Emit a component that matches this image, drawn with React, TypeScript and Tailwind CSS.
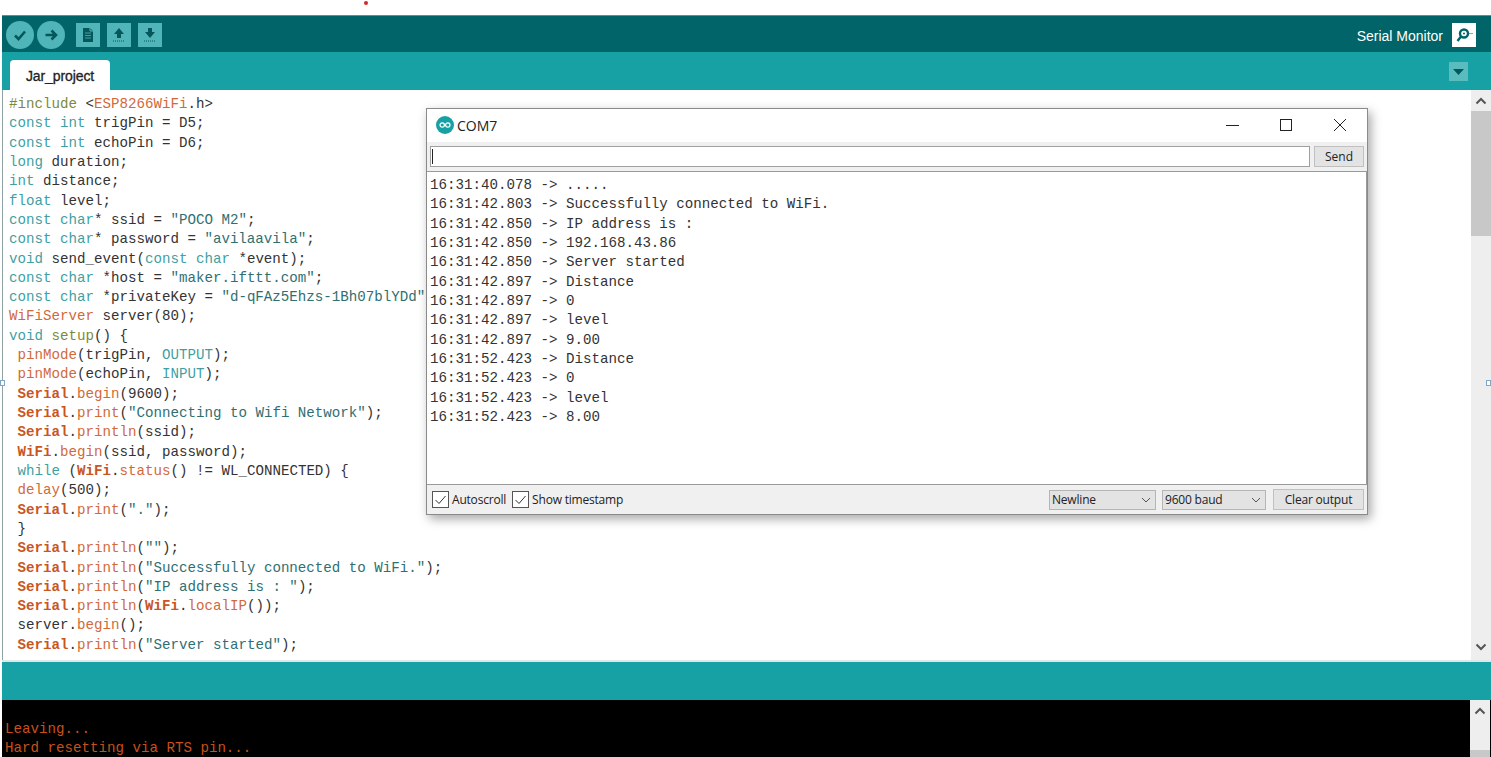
import React from "react";

const mono = "font-['Liberation_Mono',monospace]";
const ui = "font-['Open_Sans','Noto_Sans',sans-serif]";

// token colours from the Arduino theme
const KW = "text-[#3f9fa3]";
const FN = "text-[#d2693a]";
const OBJ = "font-bold text-[#c9561f]";
const STR = "text-[#2f6f72]";
const INC = "text-[#7d8a3a]";
const TXT = "text-[#333333]";

type Tok = [string, string?];

const code: Tok[][] = [
  [["#include", INC], [" <"], ["ESP8266WiFi", FN], [".h>"]],
  [["const int", KW], [" trigPin = D5;"]],
  [["const int", KW], [" echoPin = D6;"]],
  [["long", KW], [" duration;"]],
  [["int", KW], [" distance;"]],
  [["float", KW], [" level;"]],
  [["const char", KW], ["* ssid = "], ['"POCO M2"', STR], [";"]],
  [["const char", KW], ["* password = "], ['"avilaavila"', STR], [";"]],
  [["void", KW], [" send_event("], ["const char", KW], [" *event);"]],
  [["const char", KW], [" *host = "], ['"maker.ifttt.com"', STR], [";"]],
  [["const char", KW], [" *privateKey = "], ['"d-qFAz5Ehzs-1Bh07blYDd"', STR]],
  [["WiFiServer", FN], [" server(80);"]],
  [["void", KW], [" "], ["setup", INC], ["() {"]],
  [[" "], ["pinMode", FN], ["(trigPin, "], ["OUTPUT", KW], [");"]],
  [[" "], ["pinMode", FN], ["(echoPin, "], ["INPUT", KW], [");"]],
  [[" "], ["Serial", OBJ], ["."], ["begin", FN], ["(9600);"]],
  [[" "], ["Serial", OBJ], ["."], ["print", FN], ["("], ['"Connecting to Wifi Network"', STR], [");"]],
  [[" "], ["Serial", OBJ], ["."], ["println", FN], ["(ssid);"]],
  [[" "], ["WiFi", OBJ], ["."], ["begin", FN], ["(ssid, password);"]],
  [[" "], ["while", KW], [" ("], ["WiFi", OBJ], ["."], ["status", FN], ["() != WL_CONNECTED) {"]],
  [[" "], ["delay", FN], ["(500);"]],
  [[" "], ["Serial", OBJ], ["."], ["print", FN], ["("], ['"."', STR], [");"]],
  [[" }"]],
  [[" "], ["Serial", OBJ], ["."], ["println", FN], ["("], ['""', STR], [");"]],
  [[" "], ["Serial", OBJ], ["."], ["println", FN], ["("], ['"Successfully connected to WiFi."', STR], [");"]],
  [[" "], ["Serial", OBJ], ["."], ["println", FN], ["("], ['"IP address is : "', STR], [");"]],
  [[" "], ["Serial", OBJ], ["."], ["println", FN], ["("], ["WiFi", OBJ], ["."], ["localIP", FN], ["());"]],
  [[" server."], ["begin", FN], ["();"]],
  [[" "], ["Serial", OBJ], ["."], ["println", FN], ["("], ['"Server started"', STR], [");"]],
];

const output = [
  "16:31:40.078 -> .....",
  "16:31:42.803 -> Successfully connected to WiFi.",
  "16:31:42.850 -> IP address is :",
  "16:31:42.850 -> 192.168.43.86",
  "16:31:42.850 -> Server started",
  "16:31:42.897 -> Distance",
  "16:31:42.897 -> 0",
  "16:31:42.897 -> level",
  "16:31:42.897 -> 9.00",
  "16:31:52.423 -> Distance",
  "16:31:52.423 -> 0",
  "16:31:52.423 -> level",
  "16:31:52.423 -> 8.00",
];

function Chevron({ up }: { up?: boolean }) {
  return (
    <svg width="12" height="8" viewBox="0 0 12 8" className="shrink-0">
      <path
        d={up ? "M1.5 6.5 6 2l4.5 4.5" : "M1.5 1.5 6 6l4.5-4.5"}
        fill="none"
        stroke="#555555"
        strokeWidth="2"
      />
    </svg>
  );
}

function RoundBtn({ d }: { d: string }) {
  return (
    <div className="w-[28px] h-[28px] rounded-full bg-[#4fb5b8] flex items-center justify-center">
      <svg width="16" height="16" viewBox="0 0 16 16">
        <path d={d} fill="none" stroke="#04585c" strokeWidth="2.6" />
      </svg>
    </div>
  );
}

function SquareBtn({ children }: { children: React.ReactNode }) {
  return (
    <div className="w-[24px] h-[24px] bg-[#4fb5b8] flex items-center justify-center">
      <svg width="18" height="18" viewBox="0 0 18 18">
        {children}
      </svg>
    </div>
  );
}

function Check({ label }: { label: string }) {
  return (
    <div className="flex items-center gap-[3px]">
      <div className="w-[17px] h-[17px] border border-[#555555] bg-white flex items-center justify-center">
        <svg width="13" height="13" viewBox="0 0 13 13">
          <path d="M1.5 7 5 10.500 11.500 3" fill="none" stroke="#333333" strokeWidth="1" />
        </svg>
      </div>
      <span className="text-[12px] tracking-[-0.2px] text-[#222222]">{label}</span>
    </div>
  );
}

function Select({ label, w }: { label: string; w: string }) {
  return (
    <div className={`${w} h-[20px] border border-[#b5b5b5] bg-[#e3e3e3] flex items-center justify-between pl-[2px] pr-[4px]`}>
      <span className="text-[12px] tracking-[-0.2px] text-[#222222]">{label}</span>
      <svg width="10" height="6" viewBox="0 0 10 6">
        <path d="M1 1l4 4 4-4" fill="none" stroke="#555555" strokeWidth="1" />
      </svg>
    </div>
  );
}

function SerialWindow() {
  return (
    <div className={`absolute left-[426px] top-[108px] w-[942px] h-[407px] bg-[#f0f0f0] border border-[#8a8a8a] shadow-[3px_4px_10px_rgba(0,0,0,0.35)] flex flex-col ${ui}`}>
      <div className="h-[33px] bg-white flex items-center pl-[9px] pb-[1px] shrink-0">
        <svg width="18" height="18" viewBox="0 0 18 18">
          <circle cx="9" cy="9" r="9" fill="#17a1a5" />
          <circle cx="6.2" cy="9" r="2.2" fill="none" stroke="#ffffff" strokeWidth="1.2" />
          <circle cx="11.8" cy="9" r="2.2" fill="none" stroke="#ffffff" strokeWidth="1.2" />
        </svg>
        <span className="ml-[3px] text-[14px] text-[#222222]">COM7</span>
        <div className="ml-auto flex items-center">
          <div className="w-[54px] flex justify-center">
            <div className="w-[13px] h-px bg-[#222222]" />
          </div>
          <div className="w-[54px] flex justify-center">
            <div className="w-[12px] h-[12px] border border-[#222222]" />
          </div>
          <div className="w-[54px] flex justify-center">
            <svg width="14" height="14" viewBox="0 0 14 14">
              <path d="M1 1l12 12M13 1 1 13" stroke="#222222" strokeWidth="1" />
            </svg>
          </div>
        </div>
      </div>
      <div className="h-[29px] flex items-start pt-[4px] pl-[3px] pr-[3px] gap-[4px] shrink-0">
        <div className="flex-1 h-[21px] bg-white border border-[#a0a0a0] flex items-center pl-[1px]">
          <div className="w-px h-[15px] bg-[#222222]" />
        </div>
        <div className="w-[50px] h-[21px] bg-[#e3e3e3] border border-[#c0c0c0] flex items-center justify-center text-[12px] text-[#222222]">
          Send
        </div>
      </div>
      <div className={`h-[314px] bg-white border-y border-r border-[#9a9a9a] pl-[3px] pt-[4px] text-[14.17px] leading-[19.34px] text-[#333333] whitespace-pre shrink-0 ${mono}`}>
        {output.map((l) => (
          <div key={l}>{l}</div>
        ))}
      </div>
      <div className="flex-1 flex items-center pl-[5px] pr-[3px]">
        <div className="flex items-center gap-[6px]">
          <Check label="Autoscroll" />
          <Check label="Show timestamp" />
        </div>
        <div className="ml-auto flex items-center gap-[6px]">
          <Select label="Newline" w="w-[107px]" />
          <Select label="9600 baud" w="w-[104px]" />
          <div className="ml-[1px] w-[91px] h-[21px] bg-[#e3e3e3] border border-[#c0c0c0] flex items-center justify-center text-[12px] tracking-[-0.2px] text-[#222222]">
            Clear output
          </div>
        </div>
      </div>
    </div>
  );
}

export default function App() {
  return (
    <div className="relative w-[1491px] h-[757px] overflow-hidden bg-white flex flex-col pl-[2px]">
      {/* red dot above the toolbar */}
      <div className="h-[15px] shrink-0 flex pl-[362px]">
        <div className="w-[4px] h-[4px] mt-[1px] rounded-full bg-[#d9262c]" />
      </div>

      <div className="h-[37px] shrink-0 bg-[#006468] border-t border-[#5f8f92] flex items-center pl-[4px] pr-[15px] pt-[2px]">
        <div className="flex items-center gap-[3px]">
          <RoundBtn d="M3 8.5 6.5 12 13 4.5" />
          <RoundBtn d="M2.5 8h10M8.5 3.5 13 8l-4.500 4.500" />
        </div>
        <div className="ml-[11px] flex items-center gap-[7px]">
          <SquareBtn>
            <path d="M4 2h7l3 3v11H4z" fill="#04585c" />
            <path d="M11 2v3h3" fill="none" stroke="#4fb5b8" strokeWidth="1" />
            <path d="M6 7h6M6 9.500h6M6 12h6" stroke="#4fb5b8" strokeWidth="0.8" />
          </SquareBtn>
          <SquareBtn>
            <path d="M9 2 14 8h-3v4H7V8H4z" fill="#04585c" />
            <path d="M3 15h12" stroke="#04585c" strokeWidth="1" strokeDasharray="1 1" />
          </SquareBtn>
          <SquareBtn>
            <path d="M9 12 14 6h-3V2H7v4H4z" fill="#04585c" />
            <path d="M3 15h12" stroke="#04585c" strokeWidth="1" strokeDasharray="1 1" />
          </SquareBtn>
        </div>
        <span className="ml-auto mt-[2px] text-[14px] text-white font-['Liberation_Sans',sans-serif]">Serial Monitor</span>
        <div className="ml-[9px] w-[24px] h-[24px] bg-white flex items-center justify-center">
          <svg width="20" height="20" viewBox="0 0 20 20">
            <circle cx="10" cy="8.500" r="4" fill="none" stroke="#006468" strokeWidth="2.400" />
            <circle cx="10" cy="8.500" r="1" fill="#006468" />
            <path d="M7 11.500 3.500 16" stroke="#006468" strokeWidth="2.400" />
            <path d="M15.500 8.500h3" stroke="#006468" strokeWidth="1" strokeDasharray="1 1" />
          </svg>
        </div>
      </div>

      <div className="h-[38px] shrink-0 bg-[#17a1a5] flex items-end pl-[8px] pr-[23px]">
        <div className="w-[100px] h-[30px] pt-[3px] bg-white rounded-t-[4px] flex items-center justify-center text-[14px] tracking-[-0.1px] font-['Liberation_Sans',sans-serif] [-webkit-text-stroke:0.3px_#222222] text-[#222222]">
          Jar_project
        </div>
        <div className="ml-auto mb-[9px] w-[19px] h-[19px] bg-[#5bbcbf] flex items-center justify-center">
          <svg width="11" height="6" viewBox="0 0 11 6">
            <path d="M0 0h11L5.500 6z" fill="#04585c" />
          </svg>
        </div>
      </div>

      <div className="h-[570px] shrink-0 flex border-l border-[#8fa3a5]">
        <div className={`flex-1 overflow-hidden pl-[6px] pt-[5px] text-[14.17px] leading-[19.32px] whitespace-pre ${TXT} ${mono}`}>
          {code.map((line, i) => (
            <div key={i}>
              {line.map(([t, c], j) => (
                <span key={j} className={c}>
                  {t}
                </span>
              ))}
            </div>
          ))}
        </div>
        <div className="w-[20px] shrink-0 bg-[#eeeeee] flex flex-col items-center">
          <div className="h-[21px] flex items-center justify-center">
            <Chevron up />
          </div>
          <div className="w-full h-[125px] bg-[#c8c8c8]" />
          <div className="mt-auto h-[26px] flex items-center justify-center">
            <Chevron />
          </div>
        </div>
      </div>

      <div className="h-[40px] shrink-0 bg-[#17a1a5] border-t-2 border-[#dfe8e8]" />

      <div className="flex-1 flex bg-black">
        <div className={`flex-1 pl-[3px] pt-[20px] text-[14.17px] leading-[19.34px] text-[#c9501a] whitespace-pre ${mono}`}>
          <div>Leaving...</div>
          <div>Hard resetting via RTS pin...</div>
        </div>
        <div className="w-[20px] mr-px shrink-0 bg-[#eeeeee] flex flex-col items-center">
          <div className="h-[21px] flex items-center justify-center">
            <Chevron up />
          </div>
          <div className="mt-[29px] w-full flex-1 bg-[#c8c8c8]" />
        </div>
      </div>

      {/* selection handles on the screenshot edges */}
      <div className="absolute left-0 top-[380px] w-[5px] h-[6px] bg-white border border-[#7fa6c4]" />
      <div className="absolute right-0 top-[380px] w-[5px] h-[6px] bg-white border border-[#7fa6c4]" />

      <SerialWindow />
    </div>
  );
}
